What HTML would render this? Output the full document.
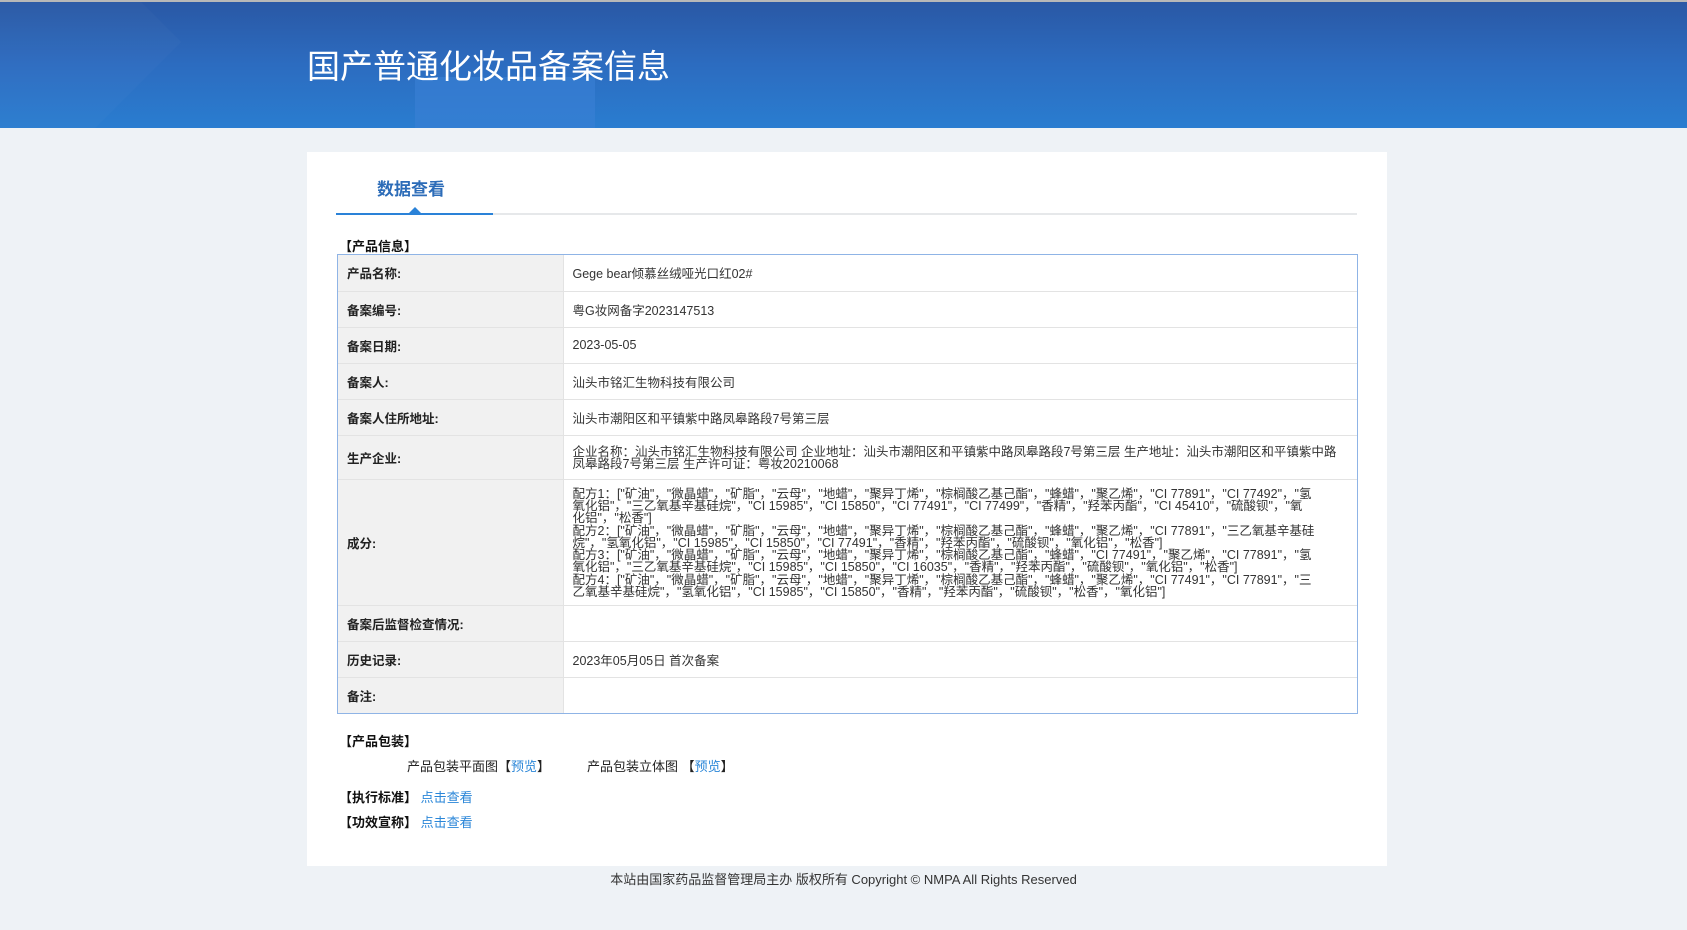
<!DOCTYPE html>
<html><head><meta charset="utf-8"><style>
*{margin:0;padding:0;box-sizing:border-box}
body{width:1687px;height:930px;background:#eef2f6;font-family:"Liberation Sans","Noto Sans CJK SC",sans-serif;color:#333;position:relative;overflow:hidden}
.hd{position:absolute;left:0;top:0;width:1687px;height:128px;border-top:2px solid #b8b8b8;background:linear-gradient(180deg,#2a58a5 0%,#2c6cc0 50%,#2a7dd0 100%);overflow:hidden}
.hd .s1{position:absolute;left:415px;top:75px;width:180px;height:60px;background:#3a80d6;opacity:.6}
.hd .s2{position:absolute;left:-60px;top:-60px;width:200px;height:200px;background:rgba(255,255,255,.02);transform:rotate(45deg)}
.hd h1{position:absolute;left:307px;top:38px;font-size:33px;font-weight:normal;color:#fff}
.card{position:absolute;left:307px;top:152px;width:1080px;height:714px;background:#fff}
.tab{position:absolute;left:70px;top:23px;font-size:17px;font-weight:bold;color:#2c6cb8}
.tabline{position:absolute;left:29px;top:61px;width:1021px;height:2px;background:#e6e8ea}
.tabact{position:absolute;left:29px;top:61px;width:157px;height:2px;background:#2a82d8}
.tri{position:absolute;left:102px;top:55px;width:0;height:0;border-left:6px solid transparent;border-right:6px solid transparent;border-bottom:6px solid #2a82d8}
.sec{position:absolute;left:32px;font-size:13px;font-weight:bold;color:#111}
.tw{position:absolute;left:30px;top:102px;width:1021px;border:1px solid #8fb4e6}
table{width:100%;border-collapse:collapse;font-size:12.5px}
td{border:1px solid #e3e3e3;padding:0 9px;vertical-align:middle}
tr:first-child td{border-top:none}tr:last-child td{border-bottom:none}
td:first-child{border-left:none}td:last-child{border-right:none}
td.l{width:225px;background:#f1f1f1;font-weight:bold;color:#222}
td.v{color:#333}
.ing{line-height:12.2px;font-size:12.5px;padding-top:2px}
.lnk{color:#2a86d8}
.row{position:absolute;font-size:13px;color:#222}
.ft{position:absolute;left:0;width:1687px;top:869px;text-align:center;font-size:13px;color:#333}
</style></head><body>
<div class="hd"><div class="s2"></div><div class="s1"></div><h1>国产普通化妆品备案信息</h1></div>
<div class="card">
<div class="tab">数据查看</div>
<div class="tabline"></div><div class="tabact"></div><div class="tri"></div>
<div class="sec" style="top:84px">【产品信息】</div>
<div class="tw"><table>
<tr style="height:36px"><td class="l">产品名称:</td><td class="v">Gege bear倾慕丝绒哑光口红02#</td></tr>
<tr style="height:36px"><td class="l">备案编号:</td><td class="v">粤G妆网备字2023147513</td></tr>
<tr style="height:36px"><td class="l">备案日期:</td><td class="v">2023-05-05</td></tr>
<tr style="height:36px"><td class="l">备案人:</td><td class="v">汕头市铭汇生物科技有限公司</td></tr>
<tr style="height:36px"><td class="l">备案人住所地址:</td><td class="v">汕头市潮阳区和平镇紫中路凤皋路段7号第三层</td></tr>
<tr style="height:44px"><td class="l">生产企业:</td><td class="v ing">企业名称：汕头市铭汇生物科技有限公司 企业地址：汕头市潮阳区和平镇紫中路凤皋路段7号第三层 生产地址：汕头市潮阳区和平镇紫中路<br>凤皋路段7号第三层 生产许可证：粤妆20210068</td></tr>
<tr style="height:126px"><td class="l">成分:</td><td class="v ing">配方1：["矿油"，"微晶蜡"，"矿脂"，"云母"，"地蜡"，"聚异丁烯"，"棕榈酸乙基己酯"，"蜂蜡"，"聚乙烯"，"CI 77891"，"CI 77492"，"氢<br>氧化铝"，"三乙氧基辛基硅烷"，"CI 15985"，"CI 15850"，"CI 77491"，"CI 77499"，"香精"，"羟苯丙酯"，"CI 45410"，"硫酸钡"，"氧<br>化铝"，"松香"]<br>配方2：["矿油"，"微晶蜡"，"矿脂"，"云母"，"地蜡"，"聚异丁烯"，"棕榈酸乙基己酯"，"蜂蜡"，"聚乙烯"，"CI 77891"，"三乙氧基辛基硅<br>烷"，"氢氧化铝"，"CI 15985"，"CI 15850"，"CI 77491"，"香精"，"羟苯丙酯"，"硫酸钡"，"氧化铝"，"松香"]<br>配方3：["矿油"，"微晶蜡"，"矿脂"，"云母"，"地蜡"，"聚异丁烯"，"棕榈酸乙基己酯"，"蜂蜡"，"CI 77491"，"聚乙烯"，"CI 77891"，"氢<br>氧化铝"，"三乙氧基辛基硅烷"，"CI 15985"，"CI 15850"，"CI 16035"，"香精"，"羟苯丙酯"，"硫酸钡"，"氧化铝"，"松香"]<br>配方4：["矿油"，"微晶蜡"，"矿脂"，"云母"，"地蜡"，"聚异丁烯"，"棕榈酸乙基己酯"，"蜂蜡"，"聚乙烯"，"CI 77491"，"CI 77891"，"三<br>乙氧基辛基硅烷"，"氢氧化铝"，"CI 15985"，"CI 15850"，"香精"，"羟苯丙酯"，"硫酸钡"，"松香"，"氧化铝"]</td></tr>
<tr style="height:36px"><td class="l">备案后监督检查情况:</td><td class="v"></td></tr>
<tr style="height:36px"><td class="l">历史记录:</td><td class="v">2023年05月05日 首次备案</td></tr>
<tr style="height:36px"><td class="l">备注:</td><td class="v"></td></tr>
</table></div>
<div class="sec" style="top:579px">【产品包装】</div>
<div class="row" style="left:100px;top:604px">产品包装平面图【<span class="lnk">预览</span>】</div>
<div class="row" style="left:280px;top:604px">产品包装立体图 【<span class="lnk">预览</span>】</div>
<div class="sec" style="top:635px">【执行标准】 <span class="lnk" style="font-weight:normal">点击查看</span></div>
<div class="sec" style="top:660px">【功效宣称】 <span class="lnk" style="font-weight:normal">点击查看</span></div>
</div>
<div class="ft">本站由国家药品监督管理局主办 版权所有 Copyright © NMPA All Rights Reserved</div>
</body></html>
